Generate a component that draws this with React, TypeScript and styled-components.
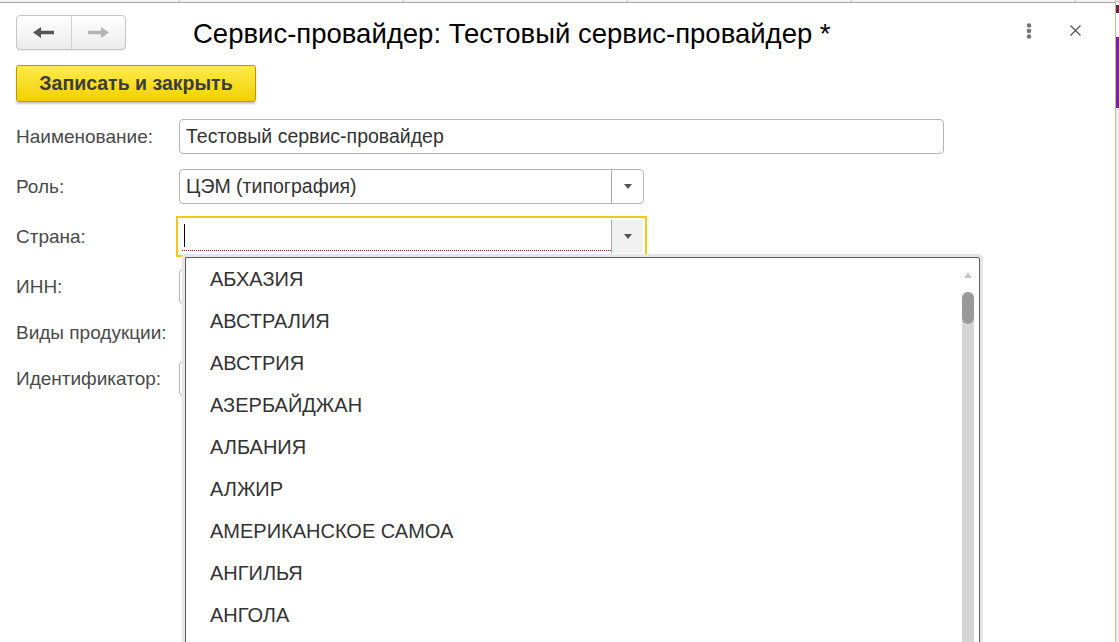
import React from 'react';
import styled, { createGlobalStyle } from 'styled-components';

const GlobalStyle = createGlobalStyle`
  html, body, #root {
    margin: 0;
    padding: 0;
    height: 100%;
  }
  body {
    font-family: "Liberation Sans", Arial, sans-serif;
    background: #ffffff;
    overflow: hidden;
  }
`;

const Page = styled.div`
  display: flex;
  width: 1119px;
  height: 642px;
  overflow: hidden;
`;

const Window = styled.div`
  position: relative;
  flex: 1;
  display: flex;
  flex-direction: column;
  background: #ffffff;
  border-right: 1px solid #c7bd8e;
`;

const BackStrip = styled.div`
  width: 3px;
  display: flex;
  flex-direction: column;
  background: #ececec;
`;

const StripPart = styled.div<{ $h: number; $c: string }>`
  height: ${(p) => p.$h}px;
  background: ${(p) => p.$c};
  flex-shrink: 0;
`;

const TopStrip = styled.div`
  display: flex;
  height: 2px;
  background: #f3f3f3;
  border-bottom: 1px solid #a3a3a3;
`;

const TopCell = styled.div<{ $w: number }>`
  width: ${(p) => p.$w}px;
  border-right: 1px solid #c4c4c4;
  flex-shrink: 0;
`;

const Header = styled.div`
  display: flex;
  align-items: center;
  padding: 12px 0 0 16px;
  height: 35px;
`;

const NavGroup = styled.div`
  display: flex;
  width: 110px;
  height: 35px;
  box-sizing: border-box;
  border: 1px solid #c6c6c6;
  border-radius: 4px;
  background: linear-gradient(#ffffff, #ececec);
  box-shadow: 0 1px 1px rgba(0, 0, 0, 0.08);
`;

const NavButton = styled.div`
  flex: 1;
  display: flex;
  align-items: center;
  justify-content: center;
  & + & {
    border-left: 1px solid #d2d2d2;
  }
`;

const Title = styled.h1`
  margin: 2px 0 0 67px;
  font-size: 27.5px;
  font-weight: normal;
  color: #000000;
  white-space: nowrap;
`;

const HeaderTools = styled.div`
  margin-left: auto;
  display: flex;
  align-items: center;
  gap: 38px;
  padding-right: 34px;
  margin-top: -4px;
`;

const Toolbar = styled.div`
  padding: 15px 0 0 16px;
`;

const SaveButton = styled.button`
  width: 240px;
  height: 37px;
  box-sizing: border-box;
  border: 1px solid #b59c00;
  border-radius: 3px;
  background: linear-gradient(#ffec4d, #f2d000);
  box-shadow: 0 2px 2px rgba(0, 0, 0, 0.22);
  font-family: "Liberation Sans", Arial, sans-serif;
  font-size: 19.5px;
  font-weight: bold;
  color: #3c3c3c;
  cursor: pointer;
  padding: 0;
`;

const Form = styled.div`
  display: grid;
  grid-template-columns: 163px 1fr;
  align-items: center;
  row-gap: 15px;
  padding: 17px 0 0 16px;
`;

const Label = styled.div`
  font-size: 19px;
  color: #4a4a4a;
  white-space: nowrap;
`;

const Field = styled.div<{ $w: number }>`
  width: ${(p) => p.$w}px;
  height: 35px;
  box-sizing: border-box;
  border: 1px solid #b4b4b4;
  border-radius: 4px;
  display: flex;
  align-items: center;
  font-size: 19.5px;
  color: #333333;
`;

const FieldText = styled.div`
  flex: 1;
  padding: 0 6px;
  white-space: nowrap;
`;

const DropButton = styled.div<{ $active?: boolean }>`
  width: 31px;
  align-self: stretch;
  border-left: 1px solid #a8a8a8;
  background: ${(p) => (p.$active ? '#f1f1f1' : 'transparent')};
  display: flex;
  align-items: center;
  justify-content: center;
`;

const Arrow = styled.div`
  width: 0;
  height: 0;
  border-left: 4px solid transparent;
  border-right: 4px solid transparent;
  border-top: 5px solid #555555;
`;

const FocusField = styled.div`
  width: 471px;
  height: 41px;
  margin: -3px 0 -3px -3px;
  box-sizing: border-box;
  border: 2px solid #f6c817;
  display: flex;
  align-items: stretch;
  padding: 2px 2px 2px 4px;
`;

const FocusInput = styled.div`
  flex: 1;
  display: flex;
  align-items: center;
  border-bottom: 1px dotted #b01010;
  margin-bottom: 2px;
  padding-left: 2px;
`;

const Caret = styled.div`
  width: 1px;
  height: 23px;
  background: #000000;
`;

const Stub = styled.div`
  height: 27px;
`;

const Dropdown = styled.div`
  position: absolute;
  left: 185px;
  top: 257px;
  width: 795px;
  height: 420px;
  box-sizing: border-box;
  border: 1px solid #5e5e5e;
  box-shadow: 0 0 0 3px #e6e6e6;
  border-radius: 0 2px 0 0;
  background: #ffffff;
  display: flex;
`;

const List = styled.div`
  flex: 1;
  padding-top: 1px;
`;

const Item = styled.div`
  height: 41.9px;
  display: flex;
  align-items: center;
  padding-left: 24px;
  font-size: 20px;
  color: #333333;
`;

const ScrollBar = styled.div`
  width: 12px;
  margin-right: 5px;
  display: flex;
  flex-direction: column;
  align-items: center;
`;

const ScrollUp = styled.div`
  margin: 14px 0 14px;
  width: 0;
  height: 0;
  border-left: 4px solid transparent;
  border-right: 4px solid transparent;
  border-bottom: 6px solid #c8c8c8;
`;

const Track = styled.div`
  flex: 1;
  width: 12px;
  background: #d5d5d5;
  border-radius: 6px 6px 0 0;
`;

const Thumb = styled.div`
  height: 32px;
  border-radius: 6px;
  background: #9a9a9a;
`;

const countries = [
  'АБХАЗИЯ',
  'АВСТРАЛИЯ',
  'АВСТРИЯ',
  'АЗЕРБАЙДЖАН',
  'АЛБАНИЯ',
  'АЛЖИР',
  'АМЕРИКАНСКОЕ САМОА',
  'АНГИЛЬЯ',
  'АНГОЛА',
];

const ArrowIcon: React.FC<{ dir: 'left' | 'right'; color: string }> = ({ dir, color }) => (
  <svg width="22" height="11" viewBox="0 0 22 11">
    <path
      d={dir === 'left' ? 'M0 5.5 L8 0 L8 3.8 L21 3.8 L21 7.2 L8 7.2 L8 11 Z' : 'M22 5.5 L14 0 L14 3.8 L1 3.8 L1 7.2 L14 7.2 L14 11 Z'}
      fill={color}
    />
  </svg>
);

const App: React.FC = () => {
  return (
    <Page>
      <GlobalStyle />
      <Window>
        <TopStrip>
          {[179, 223, 223, 223, 223].map((w, i) => (
            <TopCell key={i} $w={w} />
          ))}
        </TopStrip>

        <Header>
          <NavGroup>
            <NavButton>
              <ArrowIcon dir="left" color="#555555" />
            </NavButton>
            <NavButton>
              <ArrowIcon dir="right" color="#b3b3b3" />
            </NavButton>
          </NavGroup>
          <Title>Сервис-провайдер: Тестовый сервис-провайдер *</Title>
          <HeaderTools>
            <svg width="6" height="16" viewBox="0 0 6 16">
              <circle cx="3" cy="2.5" r="2.3" fill="#777777" />
              <circle cx="3" cy="8" r="2.3" fill="#777777" />
              <circle cx="3" cy="13.5" r="2.3" fill="#777777" />
            </svg>
            <svg width="11" height="11" viewBox="0 0 11 11">
              <path d="M0.5 0.5 L10.5 10.5 M10.5 0.5 L0.5 10.5" stroke="#555555" strokeWidth="1.3" />
            </svg>
          </HeaderTools>
        </Header>

        <Toolbar>
          <SaveButton>Записать и закрыть</SaveButton>
        </Toolbar>

        <Form>
          <Label>Наименование:</Label>
          <Field $w={765}>
            <FieldText>Тестовый сервис-провайдер</FieldText>
          </Field>

          <Label>Роль:</Label>
          <Field $w={465}>
            <FieldText>ЦЭМ (типография)</FieldText>
            <DropButton>
              <Arrow />
            </DropButton>
          </Field>

          <Label>Страна:</Label>
          <FocusField>
            <FocusInput>
              <Caret />
            </FocusInput>
            <DropButton $active>
              <Arrow />
            </DropButton>
          </FocusField>

          <Label>ИНН:</Label>
          <Field $w={300} />

          <Label>Виды продукции:</Label>
          <Stub />

          <Label>Идентификатор:</Label>
          <Field $w={300} />
        </Form>

        <Dropdown>
          <List>
            {countries.map((c) => (
              <Item key={c}>{c}</Item>
            ))}
          </List>
          <ScrollBar>
            <ScrollUp />
            <Track>
              <Thumb />
            </Track>
          </ScrollBar>
        </Dropdown>
      </Window>
      <BackStrip>
        <StripPart $h={3} $c="#d8d8d8" />
        <StripPart $h={2} $c="#ffffff" />
        <StripPart $h={8} $c="#6b2444" />
        <StripPart $h={24} $c="#ffffff" />
        <StripPart $h={71} $c="#7b1fa2" />
      </BackStrip>
    </Page>
  );
};

export default App;
